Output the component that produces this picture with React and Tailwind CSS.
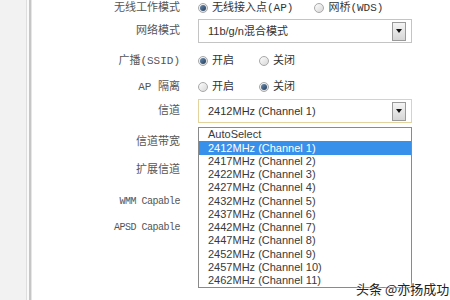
import React from "react";

const cjk = { fontFamily: '"Liberation Mono", "Noto Sans CJK SC", monospace' };
const sans = { fontFamily: '"Liberation Sans", "Noto Sans CJK SC", sans-serif' };

function Radio({ checked, label }) {
  return (
    <span className="flex items-center">
      <span className="w-[10px] h-[10px] rounded-full border border-[#a8a8a8] bg-gradient-to-br from-[#fdfdfd] to-[#d8d8d8] flex items-center justify-center">
        {checked && (
          <span className="w-[6px] h-[6px] rounded-full bg-gradient-to-br from-[#6d8fb4] to-[#233c59]" />
        )}
      </span>
      <span className="ml-[4px] text-[11px] text-[#333]" style={cjk}>{label}</span>
    </span>
  );
}

function Arrow() {
  return (
    <span className="w-[14px] h-[19px] border border-[#9a9a9a] bg-gradient-to-b from-[#f4f4f4] to-[#d6d6d6] flex items-center justify-center">
      <span className="w-0 h-0 border-l-[3px] border-r-[3px] border-t-[4px] border-l-transparent border-r-transparent border-t-[#111]" />
    </span>
  );
}

function Select({ value, focus }) {
  return (
    <div
      className={
        "w-[214px] h-[24px] border flex items-center justify-between pl-[9px] pr-[5px] bg-white " +
        (focus ? "border-[#e2d49c]" : "border-[#c4c4c4]")
      }
    >
      <span className="text-[11px] text-[#333]" style={sans}>{value}</span>
      <Arrow />
    </div>
  );
}

function Row({ label, h, children }) {
  return (
    <div className="flex items-center" style={{ height: h }}>
      <div className="w-[148px] text-right text-[11px] text-[#555] shrink-0" style={cjk}>{label}</div>
      <div className="ml-[18px] relative">{children}</div>
    </div>
  );
}

const channels = [
  "AutoSelect",
  "2412MHz (Channel 1)",
  "2417MHz (Channel 2)",
  "2422MHz (Channel 3)",
  "2427MHz (Channel 4)",
  "2432MHz (Channel 5)",
  "2437MHz (Channel 6)",
  "2442MHz (Channel 7)",
  "2447MHz (Channel 8)",
  "2452MHz (Channel 9)",
  "2457MHz (Channel 10)",
  "2462MHz (Channel 11)",
];

export default function App() {
  return (
    <div className="w-[450px] h-[300px] bg-white flex overflow-hidden relative">
      <div className="w-[26px] bg-[#f2f2f2] shrink-0" />
      <div className="w-px bg-[#dedede] shrink-0" />
      <div className="w-[2px] bg-[#fafafa] shrink-0" />
      <div className="w-[2px] bg-[#c6c6c6] shrink-0" />
      <div className="w-px bg-[#e6e6e6] shrink-0" />
      <div className="flex flex-col">
        <Row label="无线工作模式" h={16}>
          <div className="flex items-center gap-[21px]">
            <Radio checked label="无线接入点(AP)" />
            <Radio label="网桥(WDS)" />
          </div>
        </Row>
        <div className="h-[3px]" />
        <Row label="网络模式" h={24}>
          <Select value="11b/g/n混合模式" />
        </Row>
        <Row label="广播(SSID)" h={36}>
          <div className="flex items-center gap-[25px]">
            <Radio checked label="开启" />
            <Radio label="关闭" />
          </div>
        </Row>
        <Row label="AP 隔离" h={16}>
          <div className="flex items-center gap-[25px]">
            <Radio label="开启" />
            <Radio checked label="关闭" />
          </div>
        </Row>
        <Row label="信道" h={32}>
          <Select value="2412MHz (Channel 1)" focus />
          <div className="absolute left-0 top-[28px] w-[214px] border border-[#8a8a8a] bg-white z-10 flex flex-col">
            {channels.map((c, i) => (
              <div
                key={c}
                className={
                  "h-[13.25px] flex items-center pl-[9px] text-[11px] " +
                  (i === 1 ? "bg-[#3990ea] text-white" : "text-[#3a3a3a]")
                }
                style={sans}
              >
                {c}
              </div>
            ))}
          </div>
        </Row>
        <Row label="信道带宽" h={30} />
        <Row label="扩展信道" h={26} />
        <Row label={<span className="text-[10px] tracking-[-0.5px]">WMM Capable</span>} h={36} />
        <Row label={<span className="text-[10px] tracking-[-0.5px]">APSD Capable</span>} h={16} />
      </div>
      <div
        className="absolute left-[356px] top-[279px] text-[13px] text-[#222] z-20 whitespace-nowrap"
        style={{ fontFamily: '"Noto Sans CJK SC", sans-serif', textShadow: "0 0 2px #fff, 0 0 2px #fff" }}
      >
        头条 @亦扬成功
      </div>
    </div>
  );
}
